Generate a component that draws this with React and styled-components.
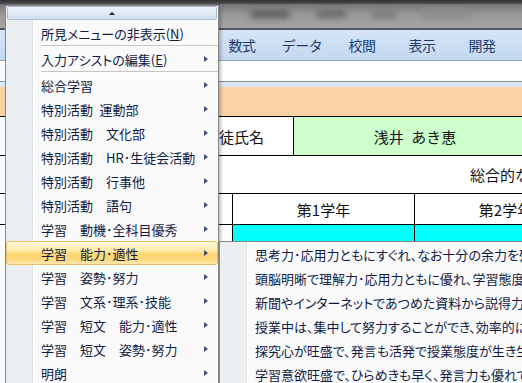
import React from "react";
import styled, { createGlobalStyle } from "styled-components";

const Global = createGlobalStyle`
  html, body { margin: 0; padding: 0; }
  body {
    width: 522px; height: 383px; overflow: hidden; background: #fff;
    font-family: "Noto Sans CJK JP", "Noto Sans", sans-serif;
  }
`;

const Screen = styled.div`
  position: relative;
  width: 522px;
  height: 383px;
  overflow: hidden;
  display: flex;
  flex-direction: column;
  background: #fff;
`;

/* ---------- Excel window behind ---------- */
const TitleArea = styled.div`
  height: 28px;
  flex: none;
  display: flex;
  align-items: center;
  gap: 26px;
  padding-left: 250px;
  background: linear-gradient(#333 0, #444 3px, #7b7b7b 5px, #9a9a9a 55%, #a4a4a4 100%);
  border-bottom: 2px solid #4d5560;
  overflow: hidden;
`;

const Smudge = styled.span`
  display: block;
  width: ${(p) => p.w}px;
  height: 8px;
  border-radius: 4px;
  background: ${(p) => p.c};
  filter: blur(3px);
`;

const TabBar = styled.div`
  height: 30px;
  flex: none;
  display: flex;
  align-items: center;
  padding-left: 212px;
  background: linear-gradient(#d6e5f7, #c3d8f1);
  border-bottom: 1px solid #8fa5c1;
`;

const Tab = styled.div`
  width: 60px;
  text-align: center;
  font-size: 14px;
  color: #1f3d6c;
  letter-spacing: -0.5px;
`;

const FormulaBar = styled.div`
  height: 20px;
  flex: none;
  background: #fff;
  border-bottom: 1px solid #8797ad;
`;

const FormulaGap = styled.div`
  height: 5px;
  flex: none;
  background: #dbe5f1;
`;

const TitleRow = styled.div`
  height: 29px;
  flex: none;
  background: #fcd1a4;
  border-bottom: 1px solid #000;
`;

const SheetRow = styled.div`
  height: ${(p) => p.h}px;
  flex: none;
  display: flex;
  border-bottom: 1px solid ${(p) => p.line || "#000"};
  overflow: hidden;
  white-space: pre;
`;

const Cell = styled.div`
  flex: none;
  width: ${(p) => p.w}px;
  display: flex;
  align-items: center;
  justify-content: ${(p) => p.align || "center"};
  padding-right: ${(p) => p.pr || 0}px;
  box-sizing: border-box;
  background: ${(p) => p.bg || "#fff"};
  border-right: ${(p) => (p.noLine ? "none" : "1px solid #000")};
  font-size: 15px;
  color: #111;
`;

const WideText = styled.div`
  flex: none;
  padding-left: 470px;
  display: flex;
  align-items: center;
  font-size: 15px;
  color: #111;
`;

const Filler = styled.div`
  flex: 1;
  background: #fff;
`;

/* ---------- Context menus ---------- */
const MenuBox = styled.div`
  position: absolute;
  left: ${(p) => p.x}px;
  top: ${(p) => p.y}px;
  width: ${(p) => p.w}px;
  box-sizing: border-box;
  border: 1px solid #878787;
  background: linear-gradient(
    to right,
    #eceff1 0,
    #eceff1 26px,
    #dfe2e5 26px,
    #dfe2e5 27px,
    #ffffff 27px,
    #ffffff 28px,
    #fafafa 28px
  );
  box-shadow: 2px 2px 3px rgba(0, 0, 0, 0.25);
  font-family: "Noto Sans CJK JP", sans-serif;
  font-feature-settings: "palt";
`;

const ScrollUp = styled.div`
  height: 12px;
  margin: 0 1px 1px;
  border: 1px solid #a9bbd6;
  border-radius: 2px;
  background: linear-gradient(#eef3fa, #d3dff0);
  display: flex;
  align-items: center;
  justify-content: center;
`;

const UpArrow = styled.span`
  width: 0;
  height: 0;
  border-left: 3px solid transparent;
  border-right: 3px solid transparent;
  border-bottom: 3px solid #222;
`;

const Item = styled.div`
  height: 24px;
  box-sizing: border-box;
  display: flex;
  align-items: center;
  justify-content: space-between;
  padding: 0 10px 0 35px;
  font-size: 13px;
  color: #111a44;
  white-space: pre;
  border: 1px solid transparent;
  border-left: none;
  border-right: none;
  ${(p) =>
    p.active &&
    `
    border: 1px solid #e5c064;
    border-radius: 3px;
    padding-left: 34px;
    padding-right: 9px;
    background: linear-gradient(#fff8dc 0%, #fee9a8 40%, #fcd470 55%, #fcd87e 80%, #fde7ae 100%);
  `}
`;

const Sep = styled.div`
  height: 2px;
  margin-left: 35px;
  border-top: 1px solid #c6c6c6;
  box-sizing: border-box;
  background: #fff;
`;

const SubArrow = styled.span`
  flex: none;
  width: 0;
  height: 0;
  border-top: 3.5px solid transparent;
  border-bottom: 3.5px solid transparent;
  border-left: 4px solid #3f4c7c;
`;

const mainItems = [
  "総合学習",
  "特別活動\u2002運動部",
  "特別活動　文化部",
  "特別活動　HR･生徒会活動",
  "特別活動　行事他",
  "特別活動　語句",
  "学習　動機･全科目優秀",
  "学習　能力･適性",
  "学習　姿勢･努力",
  "学習　文系･理系･技能",
  "学習　短文　能力･適性",
  "学習　短文　姿勢･努力",
  "明朗",
];

const subItems = [
  "思考力･応用力ともにすぐれ、なお十分の余力を残している。",
  "頭脳明晰で理解力･応用力ともに優れ、学習態度も良好である。",
  "新聞やインターネットであつめた資料から説得力のある発表をした。",
  "授業中は、集中して努力することができ、効率的に学習している。",
  "探究心が旺盛で、発言も活発で授業態度が生き生きしている。",
  "学習意欲旺盛で、ひらめきも早く、発言力も優れている。",
];

export default function App() {
  return (
    <>
      <Global />
      <Screen>
        <TitleArea>
          <Smudge w={40} c="#5e5e5e" />
          <Smudge w={30} c="#6a6a6a" />
          <Smudge w={24} c="#7a7a7a" />
          <Smudge w={50} c="#8c8c8c" />
        </TitleArea>
        <TabBar>
          <Tab>数式</Tab>
          <Tab>データ</Tab>
          <Tab>校閲</Tab>
          <Tab>表示</Tab>
          <Tab>開発</Tab>
        </TabBar>
        <FormulaBar />
        <FormulaGap />
        <TitleRow />
        <SheetRow h={38}>
          <Cell w={294} align="flex-end" pr={29}>
            生徒氏名
          </Cell>
          <Cell w={242} bg="#ccffcc" noLine>
            {"浅井\u2002あき恵"}
          </Cell>
        </SheetRow>
        <SheetRow h={37}>
          <WideText>総合的な学習の時間の記録</WideText>
        </SheetRow>
        <SheetRow h={30}>
          <Cell w={233} />
          <Cell w={182}>第1学年</Cell>
          <Cell w={182}>第2学年</Cell>
        </SheetRow>
        <SheetRow h={16} line="#fff">
          <Cell w={233} />
          <Cell w={182} bg="#00ffff" />
          <Cell w={182} bg="#00ffff" />
        </SheetRow>
        <Filler />

        <MenuBox x={5} y={5} w={214}>
          <ScrollUp>
            <UpArrow />
          </ScrollUp>
          <Item>
            <span>
              所見メニューの非表示(<u>N</u>)
            </span>
          </Item>
          <Sep />
          <Item>
            <span>
              入力アシストの編集(<u>E</u>)
            </span>
            <SubArrow />
          </Item>
          <Sep />
          {mainItems.map((t, i) => (
            <Item key={i} active={t === "学習　能力･適性"}>
              <span>{t}</span>
              <SubArrow />
            </Item>
          ))}
        </MenuBox>

        <MenuBox x={219} y={241} w={340}>
          {subItems.map((t, i) => (
            <Item key={i}>
              <span>{t}</span>
            </Item>
          ))}
        </MenuBox>
      </Screen>
    </>
  );
}
